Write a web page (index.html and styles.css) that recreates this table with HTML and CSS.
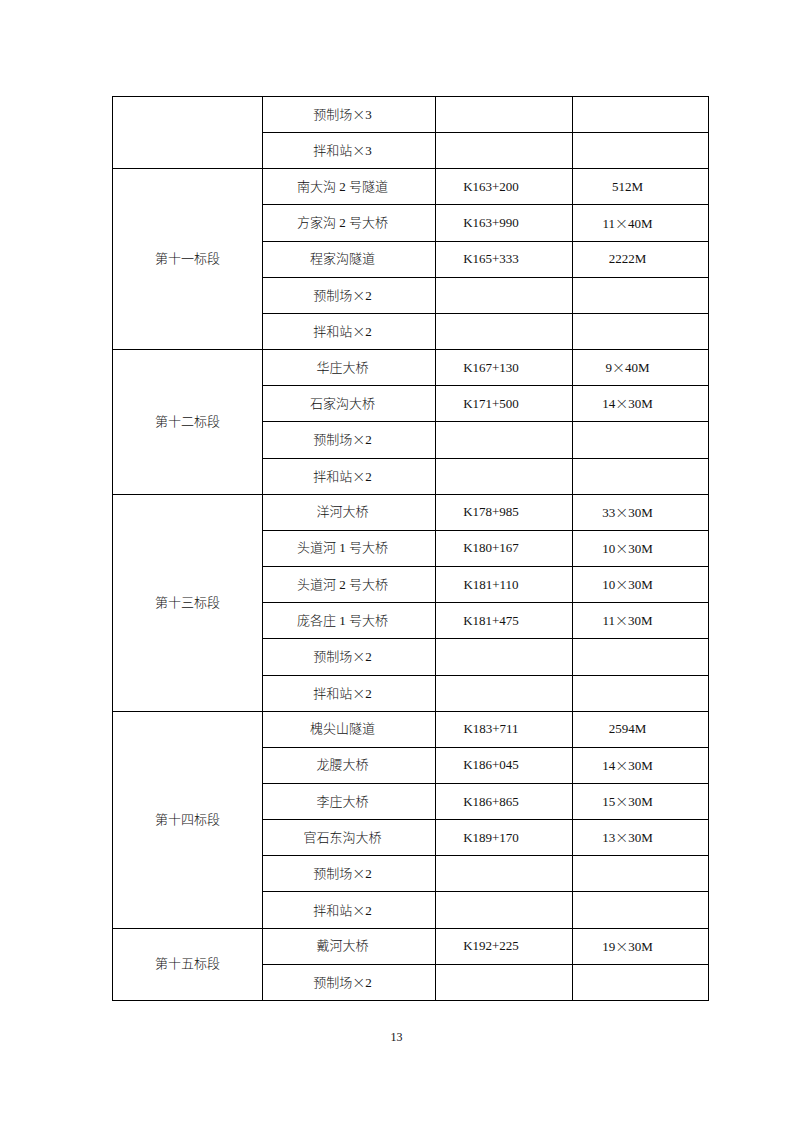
FILE: index.html
```html
<!DOCTYPE html>
<html lang="zh">
<head>
<meta charset="utf-8">
<link rel="stylesheet" href="styles.css">
</head>
<body>
<div class="page">
<table class="t">
<colgroup><col class="c1"><col class="c2"><col class="c3"><col class="c4"></colgroup>
<tr><td class="g" rowspan="2"></td><td class="n">预制场<span class="x">×</span>3</td><td class="v"></td><td class="v"></td></tr>
<tr><td class="n">拌和站<span class="x">×</span>3</td><td class="v"></td><td class="v"></td></tr>

<tr><td class="g" rowspan="5">第十一标段</td><td class="n">南大沟 2 号隧道</td><td class="v">K163+200</td><td class="v">512M</td></tr>
<tr><td class="n">方家沟 2 号大桥</td><td class="v">K163+990</td><td class="v">11<span class="x">×</span>40M</td></tr>
<tr><td class="n">程家沟隧道</td><td class="v">K165+333</td><td class="v">2222M</td></tr>
<tr><td class="n">预制场<span class="x">×</span>2</td><td class="v"></td><td class="v"></td></tr>
<tr><td class="n">拌和站<span class="x">×</span>2</td><td class="v"></td><td class="v"></td></tr>

<tr><td class="g" rowspan="4">第十二标段</td><td class="n">华庄大桥</td><td class="v">K167+130</td><td class="v">9<span class="x">×</span>40M</td></tr>
<tr><td class="n">石家沟大桥</td><td class="v">K171+500</td><td class="v">14<span class="x">×</span>30M</td></tr>
<tr><td class="n">预制场<span class="x">×</span>2</td><td class="v"></td><td class="v"></td></tr>
<tr><td class="n">拌和站<span class="x">×</span>2</td><td class="v"></td><td class="v"></td></tr>

<tr><td class="g" rowspan="6">第十三标段</td><td class="n">洋河大桥</td><td class="v">K178+985</td><td class="v">33<span class="x">×</span>30M</td></tr>
<tr><td class="n">头道河 1 号大桥</td><td class="v">K180+167</td><td class="v">10<span class="x">×</span>30M</td></tr>
<tr><td class="n">头道河 2 号大桥</td><td class="v">K181+110</td><td class="v">10<span class="x">×</span>30M</td></tr>
<tr><td class="n">庞各庄 1 号大桥</td><td class="v">K181+475</td><td class="v">11<span class="x">×</span>30M</td></tr>
<tr><td class="n">预制场<span class="x">×</span>2</td><td class="v"></td><td class="v"></td></tr>
<tr><td class="n">拌和站<span class="x">×</span>2</td><td class="v"></td><td class="v"></td></tr>

<tr><td class="g" rowspan="6">第十四标段</td><td class="n">槐尖山隧道</td><td class="v">K183+711</td><td class="v">2594M</td></tr>
<tr><td class="n">龙腰大桥</td><td class="v">K186+045</td><td class="v">14<span class="x">×</span>30M</td></tr>
<tr><td class="n">李庄大桥</td><td class="v">K186+865</td><td class="v">15<span class="x">×</span>30M</td></tr>
<tr><td class="n">官石东沟大桥</td><td class="v">K189+170</td><td class="v">13<span class="x">×</span>30M</td></tr>
<tr><td class="n">预制场<span class="x">×</span>2</td><td class="v"></td><td class="v"></td></tr>
<tr><td class="n">拌和站<span class="x">×</span>2</td><td class="v"></td><td class="v"></td></tr>

<tr><td class="g" rowspan="2">第十五标段</td><td class="n">戴河大桥</td><td class="v">K192+225</td><td class="v">19<span class="x">×</span>30M</td></tr>
<tr><td class="n">预制场<span class="x">×</span>2</td><td class="v"></td><td class="v"></td></tr>
</table>
<div class="pnum">13</div>
</div>
</body>
</html>
```
FILE: styles.css
```css
html, body {
  margin: 0;
  padding: 0;
  background: #fff;
}
.page {
  width: 793px;
  padding-top: 96px;
  font-family: "Liberation Serif", "Noto Sans CJK SC", serif;
  font-size: 13px;
  font-weight: 300;
  color: #111;
}
.t {
  margin-left: 112px;
  border-collapse: collapse;
  table-layout: fixed;
  width: 596px;
}
.c1 { width: 150px; }
.c2 { width: 173px; }
.c3 { width: 137px; }
.c4 { width: 136px; }
.t td {
  border: 1px solid #000;
  height: 36.16px;
  padding: 0;
  text-align: center;
  vertical-align: middle;
  line-height: 16px;
  box-sizing: border-box;
}
.t td.n {
  padding-right: 13px;
}
.t td.v {
  padding-right: 26px;
}
.x {
  font-family: "Noto Sans CJK SC", sans-serif;
  font-weight: 300;
  display: inline-block;
  width: 13px;
  text-align: center;
}
.pnum {
  margin-top: 28px;
  text-align: center;
  font-size: 12px;
  line-height: 16px;
}
```
